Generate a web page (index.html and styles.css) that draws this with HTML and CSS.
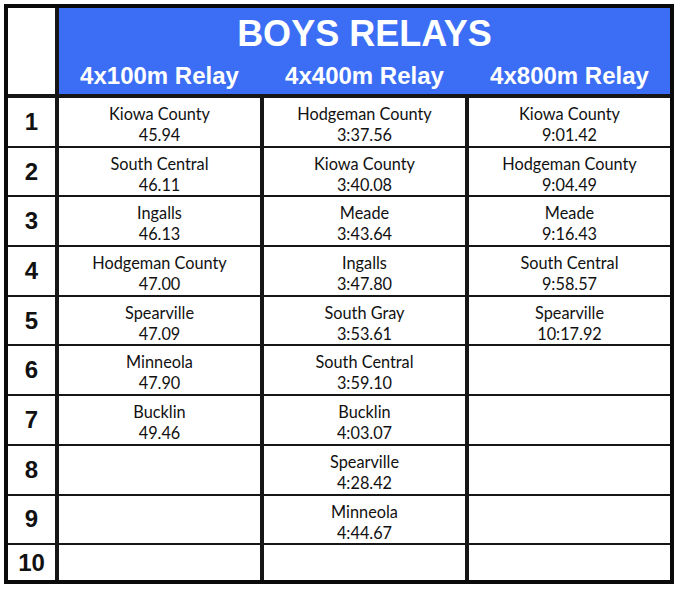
FILE: index.html
```html
<!DOCTYPE html>
<html>
<head>
<meta charset="utf-8">
<link rel="stylesheet" href="styles.css">
</head>
<body>
<div class="board">
  <div class="corner"></div>
  <div class="head">
    <div class="title">BOYS RELAYS</div>
    <div class="subs">
      <div class="sub">4x100m Relay</div>
      <div class="sub">4x400m Relay</div>
      <div class="sub">4x800m Relay</div>
    </div>
  </div>

  <div class="rank">1</div>
  <div class="cell"><div>Kiowa County</div><div>45.94</div></div>
  <div class="cell"><div>Hodgeman County</div><div>3:37.56</div></div>
  <div class="cell"><div>Kiowa County</div><div>9:01.42</div></div>

  <div class="rank">2</div>
  <div class="cell"><div>South Central</div><div>46.11</div></div>
  <div class="cell"><div>Kiowa County</div><div>3:40.08</div></div>
  <div class="cell"><div>Hodgeman County</div><div>9:04.49</div></div>

  <div class="rank">3</div>
  <div class="cell"><div>Ingalls</div><div>46.13</div></div>
  <div class="cell"><div>Meade</div><div>3:43.64</div></div>
  <div class="cell"><div>Meade</div><div>9:16.43</div></div>

  <div class="rank">4</div>
  <div class="cell"><div>Hodgeman County</div><div>47.00</div></div>
  <div class="cell"><div>Ingalls</div><div>3:47.80</div></div>
  <div class="cell"><div>South Central</div><div>9:58.57</div></div>

  <div class="rank">5</div>
  <div class="cell"><div>Spearville</div><div>47.09</div></div>
  <div class="cell"><div>South Gray</div><div>3:53.61</div></div>
  <div class="cell"><div>Spearville</div><div>10:17.92</div></div>

  <div class="rank">6</div>
  <div class="cell"><div>Minneola</div><div>47.90</div></div>
  <div class="cell"><div>South Central</div><div>3:59.10</div></div>
  <div class="cell"></div>

  <div class="rank">7</div>
  <div class="cell"><div>Bucklin</div><div>49.46</div></div>
  <div class="cell"><div>Bucklin</div><div>4:03.07</div></div>
  <div class="cell"></div>

  <div class="rank">8</div>
  <div class="cell"></div>
  <div class="cell"><div>Spearville</div><div>4:28.42</div></div>
  <div class="cell"></div>

  <div class="rank">9</div>
  <div class="cell"></div>
  <div class="cell"><div>Minneola</div><div>4:44.67</div></div>
  <div class="cell"></div>

  <div class="rank">10</div>
  <div class="cell"></div>
  <div class="cell"></div>
  <div class="cell"></div>
</div>
</body>
</html>
```
FILE: styles.css
```css
html, body {
  margin: 0;
  padding: 0;
  background: #ffffff;
}

body {
  padding: 4px 0 0 4px;
}

.board {
  display: grid;
  grid-template-columns: 47px 201px 201px 201px;
  grid-template-rows: 88px repeat(9, 47.7px) 35px;
  column-gap: 4px;
  row-gap: 2px;
  width: 662px;
  border: 4px solid #0a0a0a;
  background: #161616;
}

.corner {
  background: #ffffff;
  margin-bottom: 2px;
}

.head {
  grid-column: 2 / 5;
  margin-bottom: 2px;
  background: #3b6ef4;
  color: #ffffff;
  font-family: "Liberation Sans", Arial, sans-serif;
  font-weight: bold;
  padding-top: 6px;
  box-sizing: border-box;
}

.title {
  font-size: 36px;
  line-height: 40px;
  text-align: center;
}

.subs {
  display: grid;
  grid-template-columns: 201px 201px 201px;
  column-gap: 4px;
  margin-top: 8px;
}

.sub {
  font-size: 24px;
  line-height: 28px;
  text-align: center;
}

.rank {
  background: #ffffff;
  display: flex;
  align-items: center;
  justify-content: center;
  font-family: "Liberation Sans", Arial, sans-serif;
  font-weight: bold;
  font-size: 24px;
  color: #111111;
}

.cell {
  background: #ffffff;
  padding-top: 5px;
  box-sizing: border-box;
  text-align: center;
  font-family: Lato, "Open Sans", sans-serif;
  font-size: 16.3px;
  line-height: 21px;
  color: #111111;
}
```
